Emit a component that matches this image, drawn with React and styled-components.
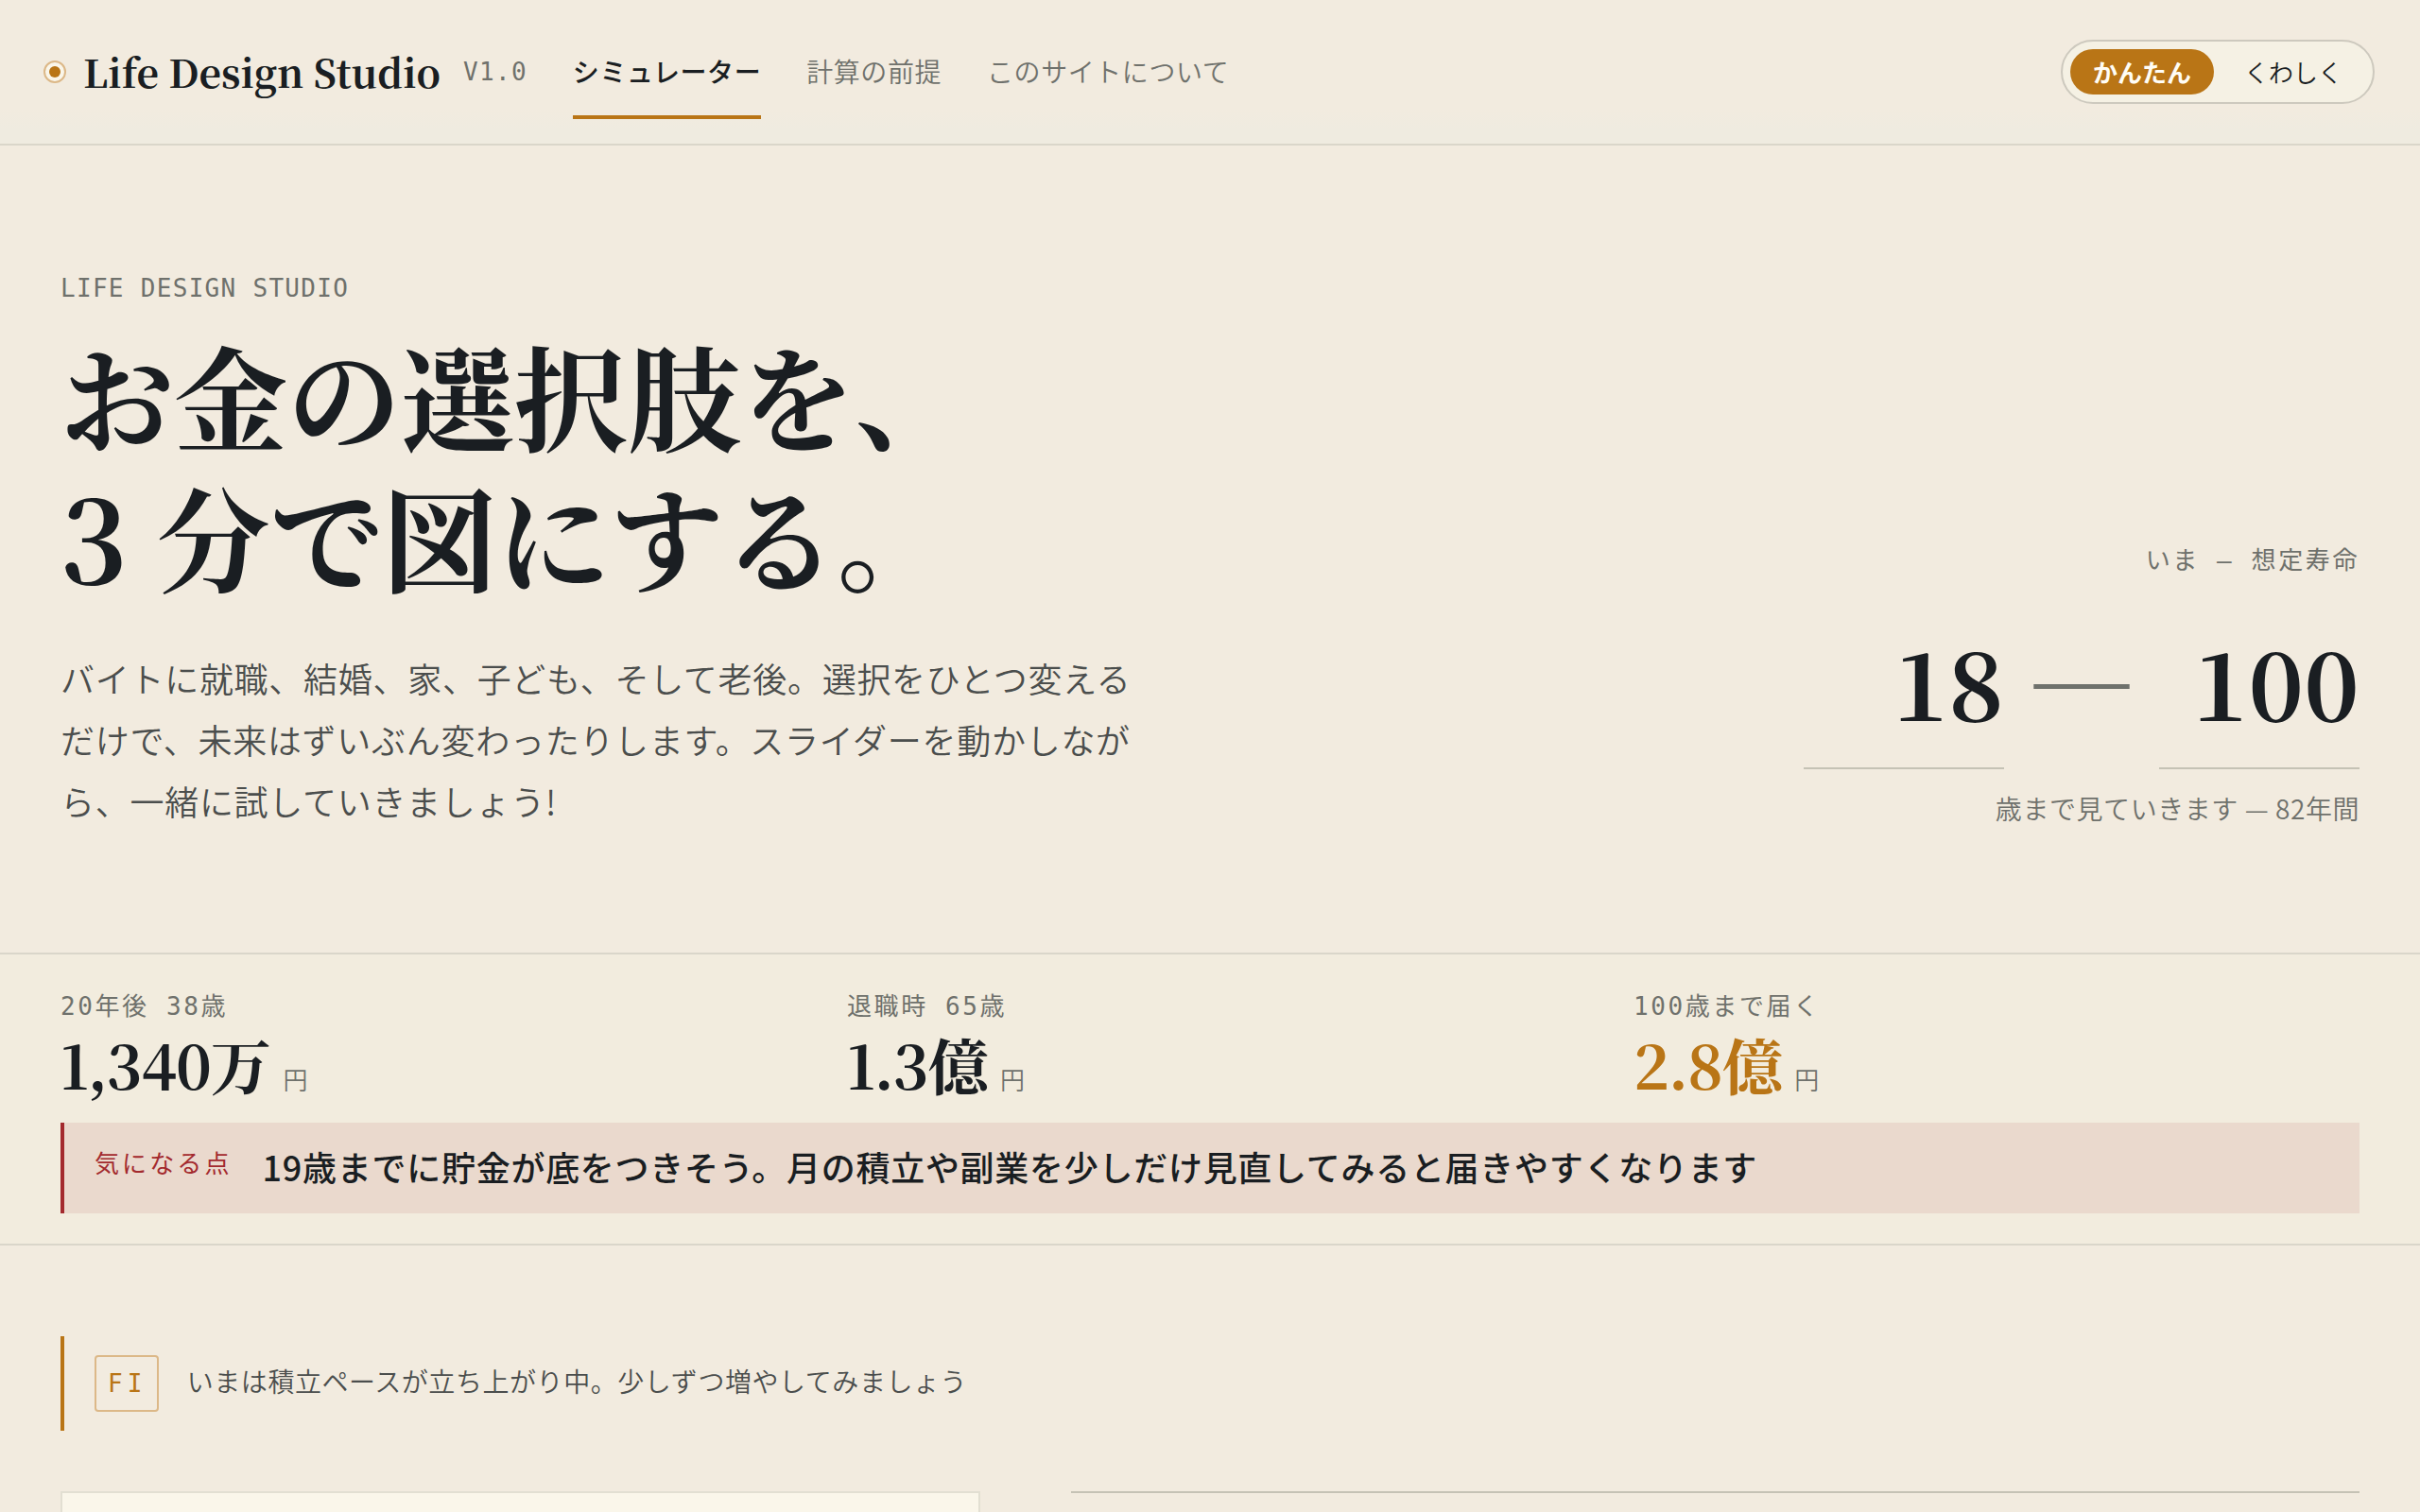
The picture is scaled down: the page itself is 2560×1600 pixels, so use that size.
import React, { useState } from "react";
import styled, { createGlobalStyle } from "styled-components";

const sans = `"Noto Sans CJK JP", "Noto Sans", sans-serif`;
const serif = `"Noto Serif CJK JP", "Liberation Serif", "Noto Sans CJK JP", serif`;
const mono = `"DejaVu Sans Mono", "Noto Sans CJK JP", monospace`;
const c = {
  bg: "#f2ebdf",
  ink: "#1a1e22",
  soft: "#4b4e4d",
  mute: "#6f716c",
  line: "#dad6ca",
  rule: "#c5c2b5",
  amber: "#b97516",
  red: "#a32a2e",
};

const Global = createGlobalStyle`
  *, *::before, *::after { box-sizing: border-box; }
  html { background: ${c.bg}; }
  body { margin: 0; color: ${c.ink}; font-family: ${sans}; font-size: 28px; line-height: 1.8; }
  h1, p, dl, dd { margin: 0; }
`;

const Page = styled.div`
  display: flex;
  flex-direction: column;
  height: 100vh;
  overflow: hidden;
`;
const Header = styled.header`
  display: flex;
  flex-shrink: 0;
  align-items: center;
  gap: 48px;
  height: 154px;
  padding: 0 48px;
  border-bottom: 2px solid ${c.line};
  background: linear-gradient(${c.bg} 75%, #efebe0 90%);
`;
const Brand = styled.a`
  display: flex;
  align-items: center;
  gap: 18px;
  color: ${c.ink};
  text-decoration: none;
`;
const Mark = styled.svg`
  width: 24px;
  height: 24px;
  margin-left: -2px;
`;
const BrandName = styled.span`
  font: 700 41px/60px ${serif};
`;
const Version = styled.span`
  margin-left: 6px;
  font: 400 26px/48px ${mono};
  letter-spacing: 0.05em;
  color: ${c.mute};
`;
const Nav = styled.nav`
  display: flex;
  gap: 48px;
  flex: 1;
`;
const NavLink = styled.a`
  padding: 24px 0 22px;
  border-bottom: 4px solid ${(p) => (p.$active ? c.amber : "transparent")};
  font-weight: ${(p) => (p.$active ? 500 : 350)};
  line-height: 50px;
  letter-spacing: 0.02em;
  color: ${(p) => (p.$active ? c.ink : c.mute)};
  text-decoration: none;
`;
const Toggle = styled.div`
  display: flex;
  gap: 8px;
  padding: 8px;
  border: 2px solid #cdc9be;
  border-radius: 34px;
  background: #f5f1e4;
`;
const ToggleButton = styled.button`
  padding: 0 24px;
  border: 0;
  border-radius: 24px;
  background: ${(p) => (p.$on ? c.amber : "transparent")};
  color: ${(p) => (p.$on ? "#fffdf6" : c.ink)};
  font: ${(p) => (p.$on ? 700 : 350)} 26px/48px ${sans};
`;

const Hero = styled.section`
  display: flex;
  flex-shrink: 0;
  align-items: flex-end;
  justify-content: space-between;
  padding: 128px 64px;
`;
const HeroCopy = styled.div`
  display: flex;
  flex-direction: column;
`;
const Eyebrow = styled.p`
  font: 400 26px/46px ${mono};
  letter-spacing: 0.05em;
  color: ${c.mute};
`;
const Title = styled.h1`
  margin-top: 15px;
  font: 700 120px/149px ${serif};
`;
const Lead = styled.p`
  max-width: 1152px;
  margin-top: 44px;
  font-size: 36px;
  font-weight: 350;
  line-height: 65px;
  letter-spacing: 0.02em;
  color: ${c.soft};
`;
const Span = styled.div`
  display: flex;
  flex-direction: column;
  align-items: flex-end;
`;
const Label = styled.p`
  font: 400 26px/46px ${mono};
  letter-spacing: 0.1em;
  color: ${c.mute};
`;
const Ages = styled.div`
  display: flex;
  align-items: center;
  gap: 32px;
  margin-top: 32px;
`;
const AgeInput = styled.input`
  width: 212px;
  height: 166px;
  padding: 0 0 20px;
  border: 0;
  border-bottom: 2px solid ${c.rule};
  outline: 0;
  background: transparent;
  color: ${c.ink};
  font: 700 100px/144px ${serif};
  text-align: right;
`;
const Dash = styled.span`
  padding-bottom: 28px;
  font: 400 100px/136px "Liberation Serif", serif;
  color: ${c.mute};
`;
const Caption = styled.p`
  margin-top: 16px;
  font-weight: 350;
  line-height: 50px;
  letter-spacing: 0.02em;
  color: ${c.mute};
`;

const Summary = styled.section`
  flex-shrink: 0;
  padding: 32px 64px;
  border: solid ${c.line};
  border-width: 2px 0;
  background: #f2ecde;
`;
const Stats = styled.dl`
  display: grid;
  grid-template-columns: repeat(3, 1fr);
  gap: 64px;
`;
const StatLabel = styled(Label).attrs({ as: "dt" })``;
const StatValue = styled.dd`
  display: flex;
  align-items: baseline;
  height: 100px;
  color: ${(p) => (p.$accent ? c.amber : c.ink)};
  font: 700 64px/74px ${serif};
  letter-spacing: -0.02em;
`;
const Unit = styled.span`
  margin-left: 14px;
  font: 350 26px/46px ${sans};
  color: ${c.mute};
`;
const Alert = styled.div`
  display: flex;
  align-items: center;
  gap: 32px;
  padding: 14px 32px 17px;
  border-left: 4px solid ${c.red};
  background: #ead9cd;
`;
const AlertLabel = styled(Label)`
  padding-bottom: 6px;
  letter-spacing: 0.12em;
  color: ${c.red};
`;
const AlertText = styled.p`
  font-size: 36px;
  font-weight: 500;
  line-height: 65px;
  letter-spacing: 0.02em;
`;

const Body = styled.main`
  flex: 1;
  display: flex;
  flex-direction: column;
  min-height: 0;
  padding: 96px 64px 0;
`;
const Notice = styled.div`
  display: flex;
  flex-shrink: 0;
  align-items: center;
  gap: 30px;
  padding: 20px 32px;
  border-left: 4px solid ${c.amber};
`;
const Badge = styled.span`
  padding: 0 10px 0 12px;
  border: 2px solid #dcb888;
  border-radius: 4px;
  font: 400 26px/56px ${mono};
  letter-spacing: 0.2em;
  color: ${c.amber};
`;
const NoticeText = styled.p`
  padding-bottom: 6px;
  font-weight: 350;
  line-height: 50px;
  letter-spacing: 0.02em;
  color: ${c.soft};
`;
const Columns = styled.div`
  flex: 1;
  display: grid;
  grid-template-columns: 5fr 7fr;
  gap: 96px;
  margin-top: 64px;
`;
const Panel = styled.section`
  border: 2px solid #e2dfd2;
  border-bottom: 0;
  background: #faf6ea;
`;
const Results = styled.section`
  border-top: 2px solid ${c.rule};
`;

const stats = [
  { label: "20年後 38歳", value: "1,340万" },
  { label: "退職時 65歳", value: "1.3億" },
  { label: "100歳まで届く", value: "2.8億", accent: true },
];

export default function App() {
  const [mode, setMode] = useState("かんたん");
  const [from, setFrom] = useState("18");
  const [to, setTo] = useState("100");
  return (
    <Page>
      <Global />
      <Header>
        <Brand href="#">
          <Mark viewBox="0 0 24 24" aria-hidden="true">
            <circle cx="12" cy="12" r="11" fill="#faf6ea" stroke="#dcb888" strokeWidth="2" />
            <circle cx="12" cy="12" r="6" fill={c.amber} />
          </Mark>
          <BrandName>Life Design Studio</BrandName>
          <Version>V1.0</Version>
        </Brand>
        <Nav>
          <NavLink href="#simulator" $active>シミュレーター</NavLink>
          <NavLink href="#assumptions">計算の前提</NavLink>
          <NavLink href="#about">このサイトについて</NavLink>
        </Nav>
        <Toggle>
          {["かんたん", "くわしく"].map((m) => (
            <ToggleButton key={m} type="button" $on={mode === m} aria-pressed={mode === m} onClick={() => setMode(m)}>
              {m}
            </ToggleButton>
          ))}
        </Toggle>
      </Header>

      <Hero>
        <HeroCopy>
          <Eyebrow>LIFE DESIGN STUDIO</Eyebrow>
          <Title>
            お金の選択肢を、
            <br />3 分で図にする。
          </Title>
          <Lead>
            バイトに就職、結婚、家、子ども、そして老後。選択をひとつ変えるだけで、未来はずいぶん変わったりします。スライダーを動かしながら、一緒に試していきましょう!
          </Lead>
        </HeroCopy>
        <Span>
          <Label>いま – 想定寿命</Label>
          <Ages>
            <AgeInput aria-label="いまの年齢" inputMode="numeric" value={from} onChange={(e) => setFrom(e.target.value)} />
            <Dash>—</Dash>
            <AgeInput aria-label="想定寿命" inputMode="numeric" value={to} onChange={(e) => setTo(e.target.value)} />
          </Ages>
          <Caption>歳まで見ていきます — 82年間</Caption>
        </Span>
      </Hero>

      <Summary>
        <Stats>
          {stats.map((s) => (
            <div key={s.label}>
              <StatLabel>{s.label}</StatLabel>
              <StatValue $accent={s.accent}>
                {s.value}
                <Unit>円</Unit>
              </StatValue>
            </div>
          ))}
        </Stats>
        <Alert role="status">
          <AlertLabel>気になる点</AlertLabel>
          <AlertText>19歳までに貯金が底をつきそう。月の積立や副業を少しだけ見直してみると届きやすくなります</AlertText>
        </Alert>
      </Summary>

      <Body>
        <Notice>
          <Badge>FI</Badge>
          <NoticeText>いまは積立ペースが立ち上がり中。少しずつ増やしてみましょう</NoticeText>
        </Notice>
        <Columns>
          <Panel aria-label="入力" />
          <Results aria-label="結果" />
        </Columns>
      </Body>
    </Page>
  );
}
